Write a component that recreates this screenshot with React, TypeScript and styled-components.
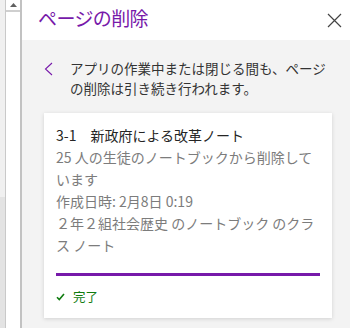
import React from "react";
import styled, { createGlobalStyle } from "styled-components";

const Global = createGlobalStyle`
  html, body { margin: 0; padding: 0; background: #ffffff; }
  body { font-family: "Noto Sans CJK JP", "Noto Sans", sans-serif; }
  #root { width: 350px; height: 328px; overflow: hidden; }
`;

const Frame = styled.div`
  display: flex;
  width: 350px;
  height: 328px;
`;

const ScrollStrip = styled.div`
  width: 22px;
  flex: none;
  display: flex;
  height: 100%;
`;

const Track = styled.div`
  width: 5px;
  display: flex;
  flex-direction: column;
`;

const TrackPart = styled.div<{ $tone: string; $h?: number }>`
  background: ${(p) => p.$tone};
  ${(p) => (p.$h ? `height: ${p.$h}px;` : "flex: 1;")}
`;

const Thumb = styled.div`
  flex: 1;
  background: #ffffff;
  border-left: 1px solid #c9c9c9;
  border-right: 2px solid #c2c2c2;
  display: flex;
  flex-direction: column;
`;

const ArrowBox = styled.div`
  height: 10px;
  border-bottom: 2px solid #cfcfcf;
  display: flex;
  align-items: center;
  justify-content: center;
`;

const Panel = styled.div`
  flex: 1;
  display: flex;
  flex-direction: column;
  background: #f3f3f3;
`;

const Header = styled.div`
  height: 40px;
  background: #ffffff;
  display: flex;
  align-items: center;
  justify-content: space-between;
  padding: 0 8px 4px 16px;
  box-sizing: border-box;
`;

const Title = styled.h1`
  margin: 0;
  font-size: 19px;
  font-weight: 400;
  letter-spacing: -0.6px;
  color: #7719aa;
  line-height: 26px;
`;

const CloseButton = styled.button`
  border: none;
  background: none;
  padding: 0;
  width: 16px;
  height: 16px;
  display: flex;
  align-items: center;
  justify-content: center;
  margin-top: 4px;
`;

const Body = styled.div`
  flex: 1;
  padding: 18px 18px 0 22px;
  display: flex;
  flex-direction: column;
  gap: 15px;
`;

const Notice = styled.div`
  display: flex;
  gap: 17px;
`;

const BackIcon = styled.div`
  width: 9px;
  height: 20px;
  display: flex;
  align-items: center;
  flex: none;
  margin-top: 1px;
`;

const NoticeText = styled.p`
  margin: 0;
  font-size: 13.5px;
  line-height: 20px;
  color: #333333;
`;

const Card = styled.div`
  background: #ffffff;
  box-shadow: 0 1px 4px rgba(0, 0, 0, 0.14);
  padding: 11px 12px 11px 12px;
  display: flex;
  flex-direction: column;
`;

const CardTitle = styled.div`
  font-size: 14px;
  line-height: 22px;
  color: #252525;
`;

const CardLine = styled.div`
  font-size: 14px;
  line-height: 22px;
  color: #7c7c7c;
`;

const NoBreak = styled.span`
  white-space: nowrap;
`;

const Progress = styled.div`
  height: 3px;
  background: #7719aa;
  margin-top: 17px;
`;

const Status = styled.div`
  margin-top: 11px;
  display: flex;
  align-items: center;
  gap: 8px;
  font-size: 12.5px;
  line-height: 20px;
  color: #107c10;
`;

export default function App() {
  return (
    <>
      <Global />
      <Frame>
        <ScrollStrip>
          <Track>
            <TrackPart $tone="#f0f0f0" $h={197} />
            <TrackPart $tone="#e3e3e3" />
          </Track>
          <Thumb>
            <ArrowBox>
              <svg width="7" height="4" viewBox="0 0 7 4">
                <polygon points="3.5,0 7,4 0,4" fill="#606060" />
              </svg>
            </ArrowBox>
          </Thumb>
        </ScrollStrip>
        <Panel>
          <Header>
            <Title>ページの削除</Title>
            <CloseButton aria-label="閉じる">
              <svg width="15" height="15" viewBox="0 0 15 15">
                <path d="M1 1 L14 14 M14 1 L1 14" stroke="#444" strokeWidth="1.2" fill="none" />
              </svg>
            </CloseButton>
          </Header>
          <Body>
            <Notice>
              <BackIcon>
                <svg width="9" height="14" viewBox="0 0 9 14">
                  <path d="M8 1 L1.5 7 L8 13" stroke="#7719aa" strokeWidth="1.1" fill="none" />
                </svg>
              </BackIcon>
              <NoticeText>
                アプリの作業中または閉じる間も、ページの削除は引き続き行われます。
              </NoticeText>
            </Notice>
            <Card>
              <CardTitle>3-1　新政府による改革ノート</CardTitle>
              <CardLine>
                25 人の生徒のノートブックから削除して <NoBreak>います</NoBreak>
              </CardLine>
              <CardLine>作成日時: 2月8日 0:19</CardLine>
              <CardLine>２年２組社会歴史 のノートブック のクラス ノート</CardLine>
              <Progress />
              <Status>
                <svg width="9" height="8" viewBox="0 0 9 8">
                  <path d="M1 4.2 L3.3 6.6 L8 1" stroke="#107c10" strokeWidth="1.6" fill="none" />
                </svg>
                完了
              </Status>
            </Card>
          </Body>
        </Panel>
      </Frame>
    </>
  );
}
